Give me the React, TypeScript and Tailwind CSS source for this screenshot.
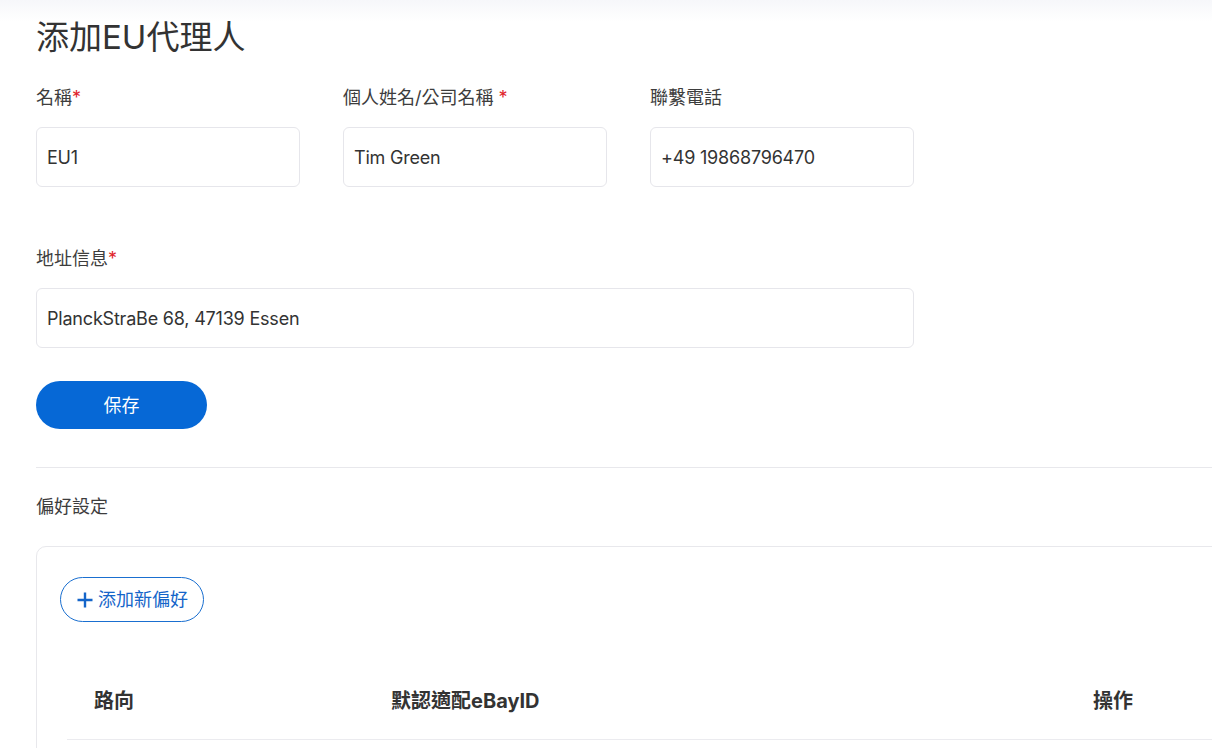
import React from "react";

const font = { fontFamily: 'Inter, "Noto Sans CJK TC", "Noto Sans CJK SC", sans-serif' };

function Field({ label, required, value, width, starGap }: { label: string; required?: boolean; value: string; width: string; starGap?: boolean }) {
  return (
    <div className="flex flex-col">
      <div className="text-[18px] leading-[24px] text-[#3d3d3d] h-[24px]">
        {label}
        {required && <span className={`text-[#e0242b] ${starGap ? "ml-[5px]" : ""}`}>*</span>}
      </div>
      <div className={`mt-[17px] h-[60px] ${width} rounded-[6px] border border-[#e6e6eb] bg-white flex items-center px-[10px] text-[18px] tracking-[-0.2px] text-[#333333]`}>
        {value}
      </div>
    </div>
  );
}

export default function App() {
  return (
    <div
      style={font}
      className="w-[1212px] h-[748px] overflow-hidden bg-[linear-gradient(to_bottom,#f6f7fa_0px,#ffffff_22px)]"
    >
      <div className="pl-[36px] pt-[17px] w-[1300px]">
        <h1 className="text-[33px] leading-[40px] text-[#333333] font-normal">添加EU代理人</h1>

        <div className="mt-[29px] flex gap-[43px]">
          <Field label="名稱" required value="EU1" width="w-[264px]" />
          <Field label="個人姓名/公司名稱" required starGap value="Tim Green" width="w-[264px]" />
          <Field label="聯繫電話" value="+49 19868796470" width="w-[264px]" />
        </div>

        <div className="mt-[60px]">
          <Field label="地址信息" required value="PlanckStraBe 68, 47139 Essen" width="w-[878px]" />
        </div>

        <button className="mt-[33px] w-[171px] h-[48px] rounded-full bg-[#0668d6] text-white text-[18px] flex items-center justify-center">
          保存
        </button>

        <div className="mt-[38px] h-px bg-[#e8e8ec]" />

        <div className="mt-[27px] text-[18px] leading-[24px] text-[#3d3d3d]">偏好設定</div>

        <div className="mt-[27px] border border-[#e8e8ec] rounded-tl-[10px] pt-[30px] pl-[23px] h-[300px]">
          <button className="h-[45px] px-[15px] rounded-full border border-[#1a6fd0] text-[#1565c9] text-[18px] flex items-center gap-[4px]">
            <svg width="18" height="18" viewBox="0 0 18 18" className="shrink-0">
              <path d="M9 1.5v15M1.5 9h15" stroke="#1565c9" strokeWidth="2.4" strokeLinecap="butt" />
            </svg>
            <span>添加新偏好</span>
          </button>

          <div className="mt-[38px] ml-[7px] border-b border-[#ebebef] h-[80px] flex items-center pt-[2px] text-[20px] font-bold text-[#333333]">
            <div className="pl-[27px] w-[324px]">路向</div>
            <div className="w-[702px]">默認適配eBayID</div>
            <div>操作</div>
          </div>
        </div>
      </div>
    </div>
  );
}
